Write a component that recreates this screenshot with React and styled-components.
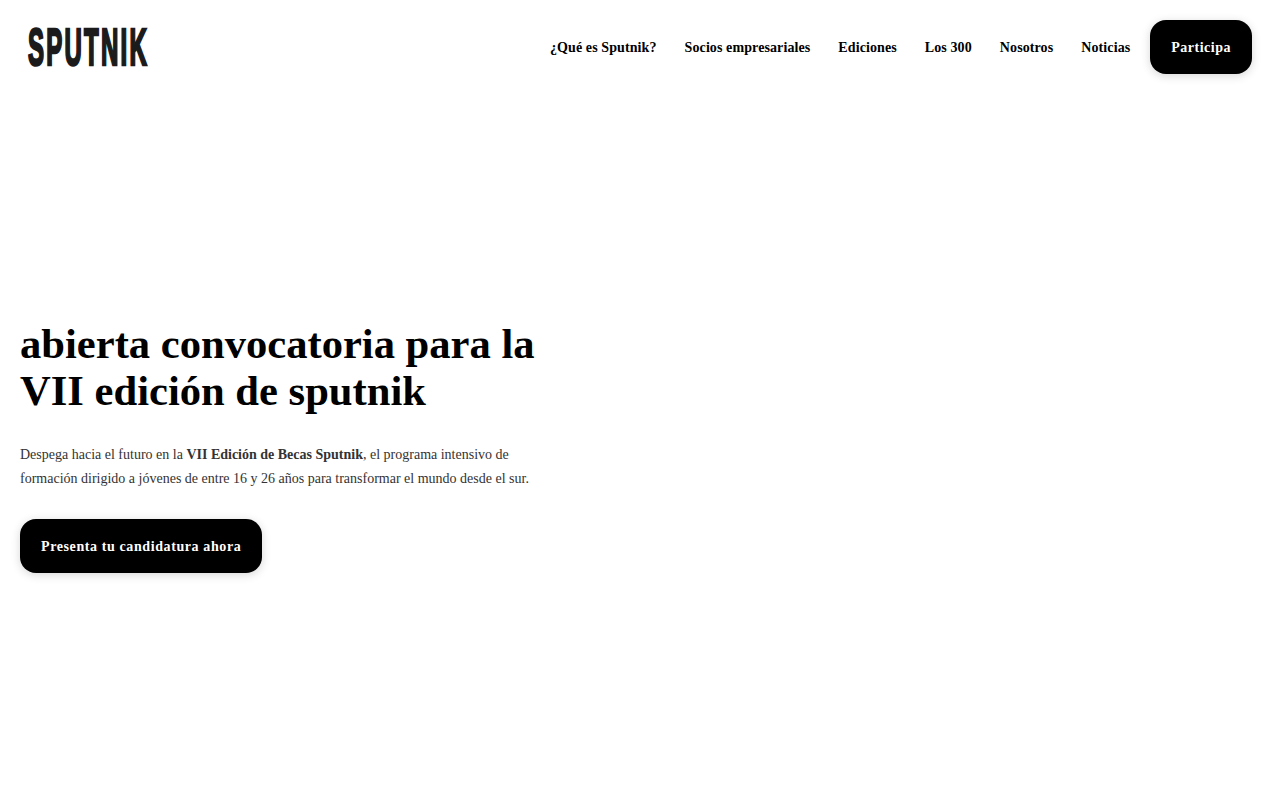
import React from "react";
import styled, { createGlobalStyle } from "styled-components";

const GlobalStyle = createGlobalStyle`
  html, body {
    margin: 0;
    padding: 0;
    background: #fff;
    font-family: "Liberation Serif", "Times New Roman", serif;
  }
  * { box-sizing: border-box; }
`;

const Page = styled.div`
  min-height: 100vh;
  display: flex;
  flex-direction: column;
  overflow: hidden;
`;

const Header = styled.header`
  height: 94px;
  padding: 20px 28px;
  display: flex;
  align-items: center;
  justify-content: space-between;
`;

const LogoWrap = styled.a`
  display: block;
  width: 120px;
  height: 38px;
  text-decoration: none;
`;

const LogoText = styled.span`
  display: block;
  font-family: "Liberation Sans", Arial, sans-serif;
  font-weight: 700;
  font-size: 27px;
  line-height: 20px;
  letter-spacing: 2.5px;
  color: #1b1b1b;
  white-space: nowrap;
  -webkit-text-stroke: 1.4px #1b1b1b;
  transform-origin: 0 0;
  transform: translateY(1px) scale(0.89, 1.92);
`;

const Nav = styled.nav`
  display: flex;
  align-items: center;
  gap: 28px;
`;

const NavLink = styled.a`
  padding-top: 2px;
  font-size: 14px;
  font-weight: 700;
  letter-spacing: 0.1px;
  color: #000;
  text-decoration: none;
  white-space: nowrap;
`;

const Button = styled.a`
  display: inline-flex;
  align-items: center;
  justify-content: center;
  height: 54px;
  padding: 2px 21px 0;
  border-radius: 16px;
  background: #000;
  color: #fff;
  font-size: 14px;
  font-weight: 700;
  letter-spacing: ${(p) => p.$spacing};
  white-space: nowrap;
  text-decoration: none;
  box-shadow: 0 2px 10px rgba(0, 0, 0, 0.16);
`;

const NavButton = styled(Button)`
  margin-left: -8px;
`;

const Hero = styled.main`
  flex: 1;
  display: flex;
  flex-direction: column;
  justify-content: center;
  align-items: flex-start;
  padding: 0 20px 1px;
`;

const Title = styled.h1`
  margin: 0 0 29px;
  width: 540px;
  font-size: 42.6px;
  line-height: 47px;
  font-weight: 700;
  color: #000;
`;

const Lead = styled.p`
  margin: 0 0 28px;
  width: 540px;
  font-size: 14px;
  line-height: 24px;
  color: #333;

  strong {
    font-weight: 700;
  }
`;

const navItems = [
  "¿Qué es Sputnik?",
  "Socios empresariales",
  "Ediciones",
  "Los 300",
  "Nosotros",
  "Noticias",
];

export default function App() {
  return (
    <Page>
      <GlobalStyle />
      <Header>
        <LogoWrap href="#home" aria-label="Sputnik">
          <LogoText>SPUTNIK</LogoText>
        </LogoWrap>
        <Nav>
          {navItems.map((item) => (
            <NavLink href="#" key={item}>{item}</NavLink>
          ))}
          <NavButton href="#" $spacing="0.5px">Participa</NavButton>
        </Nav>
      </Header>
      <Hero>
        <Title>abierta convocatoria para la VII edición de sputnik</Title>
        <Lead>
          Despega hacia el futuro en la <strong>VII Edición de Becas Sputnik</strong>, el programa intensivo de formación dirigido a jóvenes de entre 16 y 26 años para transformar el mundo desde el sur.
        </Lead>
        <Button href="#" $spacing="0.6px">Presenta tu candidatura ahora</Button>
      </Hero>
    </Page>
  );
}
